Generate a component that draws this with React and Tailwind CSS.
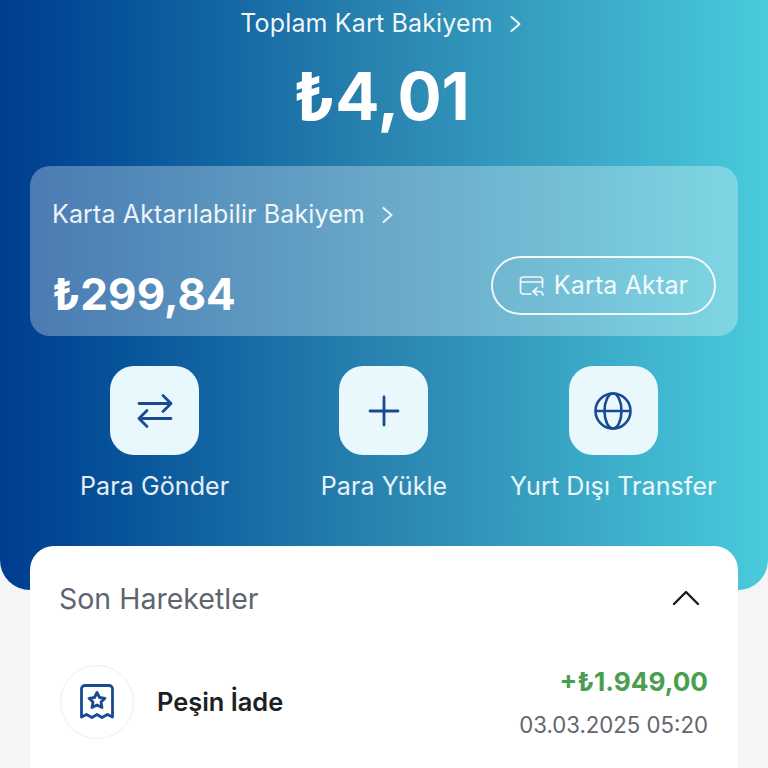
import React from "react";

function Chevron({ className }) {
  return (
    <svg viewBox="0 0 14 20" className={className} fill="none" stroke="currentColor" strokeWidth="2" strokeLinecap="round" strokeLinejoin="round">
      <path d="M2.500 3l8 7-8 7" />
    </svg>
  );
}

function Action({ label, children }) {
  return (
    <div className="flex flex-col items-center gap-[15px]">
      <div className="w-[89px] h-[89px] rounded-[24px] bg-[#e9f8fd] flex items-center justify-center text-[#1a4a94]">
        {children}
      </div>
      <span className="text-[25px] leading-[32px] text-white/90 whitespace-nowrap tracking-[0.1px]">{label}</span>
    </div>
  );
}

export default function App() {
  return (
    <div className="w-[768px] h-[768px] overflow-hidden bg-[#f5f5f8] font-['Inter',sans-serif]">
      <div className="h-[590px] rounded-b-[30px] bg-gradient-to-r from-[#003c8f] via-[#2a84b0] to-[#4acbdc] flex flex-col items-center px-[30px]">
        <div className="h-[46px] pt-[1px] pr-[5px] flex items-center gap-[16px] text-white/95 text-[25px] tracking-[0.15px]">
          <span>Toplam Kart Bakiyem</span>
          <Chevron className="w-[14px] h-[20px]" />
        </div>
        <div className="mt-[6px] pr-[5px] h-[90px] flex items-center text-white font-bold text-[65.500px] leading-none">₺4,01</div>
        <div className="mt-[24px] w-full h-[170px] shrink-0 rounded-[20px] bg-white/30 px-[22px] flex flex-col">
          <div className="mt-[33px] h-[32px] flex items-center gap-[16px] text-white/90 text-[25px] tracking-[0.13px]">
            <span>Karta Aktarılabilir Bakiyem</span>
            <Chevron className="w-[14px] h-[20px]" />
          </div>
          <div className="mt-[25px] flex items-start justify-between">
            <span className="mt-[8px] text-white font-bold text-[44px] leading-[60px]">₺299,84</span>
            <div className="w-[225px] h-[59px] rounded-full border-2 border-white/90 flex items-center justify-center gap-[9px] text-white/90 text-[25px] tracking-[0.15px]">
              <svg viewBox="0 0 26 24" className="w-[26px] h-[24px]" fill="none" stroke="currentColor" strokeWidth="1.700" strokeLinecap="round" strokeLinejoin="round">
                <path d="M12 20H4a2.500 2.500 0 0 1-2.500-2.500v-12A2.500 2.500 0 0 1 4 3h17a2.500 2.500 0 0 1 2.500 2.500V13" />
                <path d="M1.500 8h22" />
                <path d="M18 14l-4 3.500 4 3.500" />
                <path d="M14.500 17.500H20c2 0 3.500 1 4 3.500" />
              </svg>
              <span>Karta Aktar</span>
            </div>
          </div>
        </div>
        <div className="mt-[30px] w-[688px] grid grid-cols-3">
          <Action label="Para Gönder">
            <svg viewBox="0 0 36 36" className="w-[36px] h-[36px]" fill="none" stroke="currentColor" strokeWidth="2.800" strokeLinecap="round" strokeLinejoin="round">
              <path d="M2 10.500h32M26 2.500l8 8-8 8" />
              <path d="M34 25.500H2M10 17.500l-8 8 8 8" />
            </svg>
          </Action>
          <Action label="Para Yükle">
            <svg viewBox="0 0 32 32" className="w-[32px] h-[32px]" fill="none" stroke="currentColor" strokeWidth="2.800" strokeLinecap="round">
              <path d="M16 2v28M2 16h28" />
            </svg>
          </Action>
          <Action label="Yurt Dışı Transfer">
            <svg viewBox="0 0 38 38" className="w-[38px] h-[38px]" fill="none" stroke="currentColor" strokeWidth="2.600">
              <circle cx="19" cy="19" r="17.500" />
              <ellipse cx="19" cy="19" rx="8.500" ry="17.500" />
              <path d="M1.500 19h35" />
            </svg>
          </Action>
        </div>
      </div>

      <div className="mt-[-44px] mx-[30px] h-[300px] rounded-t-[24px] bg-white pl-[29px] pr-[30px]">
        <div className="h-[104px] flex items-center justify-between">
          <span className="mt-[2px] text-[28.500px] text-[#5f6570]">Son Hareketler</span>
          <svg viewBox="0 0 28 16" className="w-[28px] h-[16px] mr-[8px] text-[#1a1a1a]" fill="none" stroke="currentColor" strokeWidth="2.400" strokeLinecap="round" strokeLinejoin="round">
            <path d="M2 14L14 2l12 12" />
          </svg>
        </div>
        <div className="mt-[11px] flex items-start justify-between">
          <div className="flex items-center gap-[23px] mt-[4px] ml-[1px]">
            <div className="w-[74px] h-[74px] rounded-full border border-[#eeeff2] flex items-center justify-center">
              <svg viewBox="0 0 34 36" className="w-[34px] h-[36px] text-[#1a4a94]" fill="none" stroke="currentColor" strokeWidth="2.800" strokeLinejoin="round" strokeLinecap="round">
                <path d="M1.500 33V5a3.500 3.500 0 0 1 3.500-3.500h24A3.500 3.500 0 0 1 32.500 5v28l-5-2.500-5.500 3-5-3-5 3-5.500-3z" />
                <path d="M17 8.500l2.500 5 5.500.8-4 3.800 1 5.400-5-2.600-5 2.600 1-5.400-4-3.800 5.500-.8z" />
              </svg>
            </div>
            <span className="text-[25.400px] font-semibold text-[#1e1f22]">Peşin İade</span>
          </div>
          <div className="flex flex-col items-end">
            <span className="mt-[3px] text-[26.200px] leading-[36px] font-bold text-[#4a9e50]">+₺1.949,00</span>
            <span className="mt-[10px] text-[22.200px] leading-[30px] text-[#62666e]">03.03.2025 05:20</span>
          </div>
        </div>
      </div>
    </div>
  );
}
